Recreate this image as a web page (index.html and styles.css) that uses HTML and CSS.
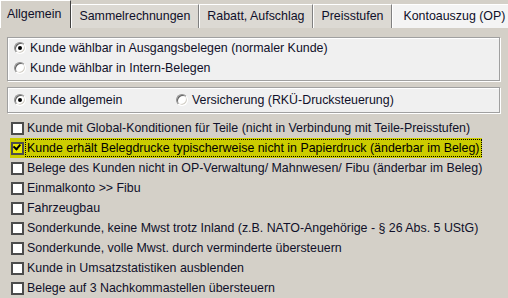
FILE: index.html
```html
<!doctype html>
<html>
    <head>
        <meta charset="utf-8">
        <link rel="stylesheet" href="styles.css">
    </head>
    <body>
        <div class="tabs">
            <div class="tab active">Allgemein</div>
            <div class="tab">Sammelrechnungen</div>
            <div class="tab">Rabatt, Aufschlag</div>
            <div class="tab">Preisstufen</div>
            <div class="tab hot">Kontoauszug (OP)</div>
        </div>
        <div class="page">
            <div class="group">
                <div class="opt"><span class="radio on"></span>Kunde wählbar in Ausgangsbelegen (normaler Kunde)</div>
                <div class="opt"><span class="radio"></span>Kunde wählbar in Intern-Belegen</div>
            </div>
            <div class="group row">
                <div class="opt first"><span class="radio on"></span>Kunde allgemein</div>
                <div class="opt"><span class="radio"></span>Versicherung (RKÜ-Drucksteuerung)</div>
            </div>
            <div class="checks">
                <div class="check"><span class="box"></span><span class="lbl">Kunde mit Global-Konditionen für Teile (nicht in Verbindung mit Teile-Preisstufen)</span></div>
                <div class="check focus"><span class="box on"></span><span class="lbl">Kunde erhält Belegdrucke typischerweise nicht in Papierdruck (änderbar im Beleg)</span></div>
                <div class="check"><span class="box"></span><span class="lbl">Belege des Kunden nicht in OP-Verwaltung/ Mahnwesen/ Fibu (änderbar im Beleg)</span></div>
                <div class="check"><span class="box"></span><span class="lbl">Einmalkonto &gt;&gt; Fibu</span></div>
                <div class="check"><span class="box"></span><span class="lbl">Fahrzeugbau</span></div>
                <div class="check"><span class="box"></span><span class="lbl">Sonderkunde, keine Mwst trotz Inland (z.B. NATO-Angehörige - § 26 Abs. 5 UStG)</span></div>
                <div class="check"><span class="box"></span><span class="lbl">Sonderkunde, volle Mwst. durch verminderte übersteuern</span></div>
                <div class="check"><span class="box"></span><span class="lbl">Kunde in Umsatzstatistiken ausblenden</span></div>
                <div class="check"><span class="box"></span><span class="lbl">Belege auf 3 Nachkommastellen übersteuern</span></div>
            </div>
        </div>
    </body>
</html>
```

FILE: styles.css
```css
html, body {
    margin: 0;
    height: 100%;
}
body {
    background: #d4d0c8;
    font: 12.4px/1 "Liberation Sans", Arial, sans-serif;
    color: #10102a;
    overflow: hidden;
}
.tabs {
    display: flex;
    align-items: flex-end;
    height: 28px;
    box-shadow: inset 0 -1px #fff;
}
.tab {
    height: 24px;
    box-sizing: border-box;
    padding: 5px 8px 0 7px;
    background: #dcd9d3;
    border-top: 1px solid #fff;
    border-left: 1px solid #fff;
    border-right: 1px solid #808080;
    white-space: nowrap;
}
.tab.active {
    height: 28px;
    padding: 7px 9px 0 6px;
    background: #d4d0c8;
    border-right: 1px solid #404040;
}
.tab.hot {
    flex: 1;
    background: #f4f4f4;
    padding-left: 10px;
    margin-right: 1px;
}
.page {
    padding: 9px 8px 0 7px;
}
.group {
    background: #f0f0f0;
    border: 1px solid #a0a0a0;
    box-shadow: inset 1px 1px #fff, 1px 1px #fff;
    padding: 0 6px 2px;
    margin-bottom: 6px;
}
.group.row {
    display: flex;
    padding: 2px 6px 2px;
    margin-bottom: 5px;
}
.opt {
    display: flex;
    align-items: center;
    height: 20px;
    white-space: nowrap;
}
.opt.first {
    width: 162px;
}
.radio {
    position: relative;
    flex-shrink: 0;
    width: 12px;
    height: 12px;
    box-sizing: border-box;
    margin-right: 4px;
    border-radius: 50%;
    border: 1px solid;
    border-color: #909090 #fff #fff #909090;
    background: #fff;
    box-shadow: inset 1px 1px #606060, inset -1px -1px #d4d0c8;
}
.radio.on::after {
    content: "";
    position: absolute;
    left: 3px;
    top: 3px;
    width: 4px;
    height: 4px;
    border-radius: 50%;
    background: #000;
}
.checks {
    margin-left: 3px;
}
.check {
    display: flex;
    align-items: center;
    height: 20px;
    white-space: nowrap;
}
.check.focus {
    display: inline-flex;
    background: #cccc00;
    padding-right: 1px;
    color: #000;
}
.box {
    position: relative;
    flex-shrink: 0;
    width: 13px;
    height: 13px;
    box-sizing: border-box;
    margin-left: 1px;
    border: 2px solid #4c4c4c;
    background: #fff;
}
.box.on {
    background: #e8e800;
}
.box.on::after {
    content: "";
    position: absolute;
    left: 1px;
    top: 0px;
    width: 5px;
    height: 3px;
    border-left: 2px solid #000;
    border-bottom: 2px solid #000;
    transform: rotate(-50deg);
    transform-origin: 3px 3px;
}
.lbl {
    margin-left: 2px;
    padding: 1px 1px;
    line-height: 14px;
}
.focus .lbl {
    outline: 1px dotted #000;
}
```
